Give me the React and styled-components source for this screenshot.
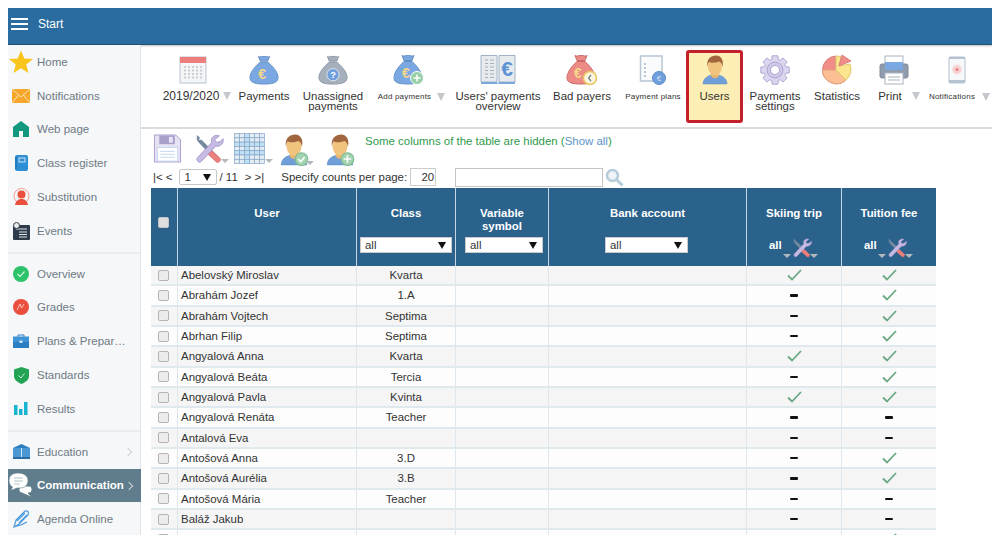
import React from 'react';
import styled, { createGlobalStyle } from 'styled-components';

const GlobalStyle = createGlobalStyle`
    html, body { background: #fff; }
    body {
        margin: 8px;
        font-family: "Liberation Sans", Arial, sans-serif;
        font-size: 11.45px;
        color: #333;
    }
`;

// ---- icons ----
const Svg = ({ w, h, children, vb }) => (
    <svg width={w} height={h} viewBox={vb || `0 0 ${w} ${h}`} style={{ display: 'block', flexShrink: 0 }}>{children}</svg>
);

const Bag = ({ fill, stroke, children }) => (
    <Svg w={30} h={30} vb="0 0 32 32">
        <path d="M10 1.5 C12 3 14 1 16 1.500 C18 1 20 3 22 1.500 L20 6.500 L12 6.500 Z" fill={fill} stroke={stroke} />
        <path d="M12 7.500 H20 C25 12 31 18 31 24 C31 30 24 31 16 31 C8 31 1 30 1 24 C1 18 7 12 12 7.500 Z" fill={fill} stroke={stroke} />
        {children}
    </Svg>
);
const Badge = ({ cx, cy, r, fill, children }) => (
    <g>
        <circle cx={cx} cy={cy} r={r} fill={fill} stroke="#fff" strokeWidth="1" />
        {children}
    </g>
);
const Plus = ({ cx, cy, s = 3.5 }) => (
    <path d={`M${cx - s} ${cy}H${cx + s}M${cx} ${cy - s}V${cy + s}`} stroke="#fff" strokeWidth="1.500" />
);
const Euro = ({ x, y, size, color }) => (
    <text x={x} y={y} fontSize={size} fill={color} textAnchor="middle" fontFamily="Liberation Sans" fontWeight="700">€</text>
);

const CalendarIcon = () => (
    <Svg w={28} h={28}>
        <rect x="1" y="1" width="26" height="26" fill="#f4f5f7" stroke="#b9c4cf" />
        <rect x="1" y="1" width="26" height="6" fill="#ec7f7c" />
        {[0, 1, 2, 3].map(r => [0, 1, 2, 3, 4].map(c => (
            <rect key={`${r}${c}`} x={5 + c * 4} y={10 + r * 3.500} width="2" height="2" fill="#c8d0d8" />
        )))}
    </Svg>
);
const PaymentsIcon = () => <Bag fill="#7ba8e2" stroke="#6690c4"><Euro x={14} y={26} size={15} color="#f5d78a" /></Bag>;
const UnassignedIcon = () => (
    <Bag fill="#a6afbc" stroke="#8c96a4">
        <circle cx="16" cy="21" r="6.500" fill="#6f9fdc" stroke="#dfe6ee" />
        <text x="16" y="24.500" fontSize="10" fontWeight="700" fill="#fff" textAnchor="middle" fontFamily="Liberation Sans">?</text>
    </Bag>
);
const AddPaymentsIcon = () => (
    <Svg w={32} h={32}>
        <path d="M9 1.500 C11 3 13 1 15 1.500 C17 1 19 3 21 1.500 L19 6.500 L11 6.500 Z" fill="#7ba8e2" stroke="#6690c4" />
        <path d="M11 7.500 H19 C24 12 29 18 29 24 C29 29 22 30 15 30 C7 30 1 29 1 24 C1 18 6 12 11 7.500 Z" fill="#7ba8e2" stroke="#6690c4" />
        <Euro x={13} y={24} size={14} color="#f5d78a" />
        <Badge cx={24} cy={24} r={6.500} fill="#9ad0a8"><Plus cx={24} cy={24} /></Badge>
    </Svg>
);
const OverviewIcon = () => (
    <Svg w={36} h={32}>
        <path d="M1 1.500 H17 V28 H1 Z" fill="#e8ebee" stroke="#9eb3c6" />
        <path d="M19 1.500 H35 V28 H19 Z" fill="#e8ebee" stroke="#9eb3c6" />
        <path d="M1 28 H17 L18 30 L19 28 H35 V30 H1 Z" fill="#7ba8d8" />
        {[6, 9.500, 13, 16.500, 20, 23.500].map(y => <path key={y} d={`M5 ${y}H8M10 ${y}H14`} stroke="#a8aeb4" />)}
        <text x="27" y="22" fontSize="21" fontWeight="700" fill="#5c93d6" textAnchor="middle" fontFamily="Liberation Sans">€</text>
    </Svg>
);
const BadPayersIcon = () => (
    <Svg w={32} h={32}>
        <path d="M9 1.500 C11 3 13 1 15 1.500 C17 1 19 3 21 1.500 L19 6.500 L11 6.500 Z" fill="#ec8a86" stroke="#c9696a" />
        <path d="M11 7.500 H19 C24 12 29 18 29 24 C29 29 22 30 15 30 C7 30 1 29 1 24 C1 18 6 12 11 7.500 Z" fill="#ec8a86" stroke="#c9696a" />
        <Euro x={12} y={24} size={14} color="#f5d78a" />
        <circle cx="24" cy="24" r="6.500" fill="#fdf6dc" stroke="#e8c65e" strokeWidth="1.500" />
        <path d="M25 21 L22.500 24 L25 27" fill="none" stroke="#6d7c8c" strokeWidth="1.200" />
    </Svg>
);
const PlansIcon = () => (
    <Svg w={28} h={30}>
        <path d="M1.500 1 H23 V26 H1.500 Z" fill="#fafbfc" stroke="#b8c6d4" strokeWidth="1.500" />
        {[8, 12, 16, 20].map(y => <rect key={y} x="5" y={y} width="2" height="2" fill="#b9c6d2" />)}
        <circle cx="20" cy="23" r="6.500" fill="#6f9fdc" stroke="#5f8bc4" />
        <text x="20" y="26" fontSize="8" fill="#cfe0f5" textAnchor="middle" fontFamily="Liberation Sans">€</text>
    </Svg>
);
const UserIcon = ({ w = 26, h = 30, children }) => (
    <Svg w={w} h={h} vb="0 0 26 30">
        <path d="M1 29 C1 23 6 21 9 20 H17 C20 21 25 23 25 29 Z" fill="#6f9ed8" stroke="#5f8bc4" strokeWidth=".5" />
        <path d="M9 18 H17 V21 C15 24 11 24 9 21 Z" fill="#e9b66f" />
        <ellipse cx="13" cy="11.500" rx="7" ry="9" fill="#f0c47e" />
        <path d="M5.500 12 C4 4 9 .5 14 .5 C19 .5 22 5 20.500 12 C20 9 19 7 17 6.500 C14 8 9 8 7 7 C6 8 5.800 10 5.500 12 Z" fill="#a0673f" />
        {children}
    </Svg>
);
const UserCheckIcon = () => (
    <UserIcon w={30} h={32}>
        <circle cx="20" cy="23.500" r="6" fill="#a3d3ae" stroke="#7fb892" />
        <path d="M17 23.500 L19.300 26 L23 21.500" fill="none" stroke="#fff" strokeWidth="1.500" />
    </UserIcon>
);
const UserPlusIcon = () => (
    <UserIcon w={30} h={32}>
        <circle cx="20" cy="23.500" r="6" fill="#a3d3ae" stroke="#7fb892" />
        <Plus cx={20} cy={23.500} />
    </UserIcon>
);

// eight toothed wheel, points worked out from the angle
const gearPath = (() => {
    const pts = [];
    for (let i = 0; i < 8; i++) {
        const a = (i * Math.PI) / 4 - Math.PI / 2;
        [[-0.3, 11], [-0.2, 14.500], [0.2, 14.500], [0.3, 11]].forEach(([d, r]) => {
            pts.push(`${(15 + r * Math.cos(a + d)).toFixed(1)} ${(15 + r * Math.sin(a + d)).toFixed(1)}`);
        });
    }
    return `M${pts.join('L')}Z`;
})();
const GearIcon = () => (
    <Svg w={30} h={30}>
        <path d={gearPath} fill="#dcd6ef" stroke="#b0a7d2" />
        <circle cx="15" cy="15" r="8" fill="#cfc8e8" stroke="#b0a7d2" />
        <circle cx="15" cy="15" r="4.500" fill="#fff" stroke="#b0a7d2" />
    </Svg>
);
const PieIcon = () => (
    <Svg w={32} h={32}>
        <path d="M15 16 L15 2 A14 14 0 0 0 1.500 16 A14 14 0 0 0 25 26 Z" fill="#f08d88" stroke="#d9817b" />
        <path d="M15 16 L1.500 16 A14 14 0 0 0 25 26 Z" fill="#fcbf93" stroke="#e2a57e" />
        <path d="M15 16 L15 2 L20 2.500 L18 12 L29 10 A14 14 0 0 1 25 26 Z" fill="#fbe58d" stroke="#e0c872" />
        <path d="M18 12 L21 1 L30 7 Z" fill="#f08d88" stroke="#d9817b" />
    </Svg>
);
const PrintIcon = () => (
    <Svg w={30} h={30}>
        <rect x="6" y="1" width="18" height="10" fill="#fff" stroke="#aab4c0" />
        <rect x="1" y="9" width="28" height="14" rx="2" fill="#8f9cad" stroke="#7d8a9b" />
        <rect x="6" y="7" width="18" height="8" fill="#7ba8e2" />
        <rect x="6" y="18" width="18" height="11" fill="#fff" stroke="#aab4c0" />
        <path d="M9 22H21M9 25H21" stroke="#aab4c0" />
    </Svg>
);
const PhoneIcon = () => (
    <Svg w={18} h={28}>
        <rect x=".5" y=".5" width="17" height="27" rx="2" fill="#b4c2d2" />
        <rect x="1.500" y="3" width="15" height="21" fill="#f7f8fa" />
        <circle cx="9" cy="13.500" r="5" fill="#f9dcdc" />
        <circle cx="9" cy="13.500" r="3" fill="none" stroke="#efa9aa" strokeDasharray="1 1" />
        <circle cx="9" cy="13.500" r="1.500" fill="#e8797b" />
    </Svg>
);
const SaveIcon = () => (
    <Svg w={29} h={29} vb="0 0 29 30">
        <path d="M1 1 H23 L28 6 V29 H1 Z" fill="#e6e1f3" stroke="#a99fd0" />
        <rect x="6" y="1.500" width="16" height="9" fill="#a99fc9" />
        <rect x="16" y="3" width="4" height="6" fill="#e8e4f4" />
        <rect x="4" y="14" width="21" height="14" fill="#fff" stroke="#c6d7ec" />
        <path d="M7 18H22M7 21H22M7 24H22" stroke="#c6d7ec" />
    </Svg>
);
const ToolsIcon = ({ size = 30 }) => (
    <Svg w={size} h={size} vb="0 0 32 32">
        <path d="M3 1 L6.500 4 L5 6 L8 6 L28 26 L25 30 L5 9 L3 6 Z" fill="#768aa0" />
        <path d="M16 15 L28 26 A3 3 0 0 1 24 30 L12 19 Z" fill="#ec7f7c" stroke="#cc6665" strokeWidth=".6" />
        <path d="M27 2 L22 6 L24 9 L28 8 L31 5 C32 10 28 14 23 13 L8 29 C6 32 1 28 4 25 L19 9 C17 4 22 0 27 2 Z" fill="#c7bbe4" stroke="#a595cc" />
    </Svg>
);
const GridIcon = () => (
    <Svg w={31} h={31}>
        {[0, 1, 2, 3, 4, 5].map(c => [0, 1, 2, 3, 4, 5, 6].map(r => (
            <rect key={`${c}-${r}`} x={.5 + c * 5} y={.5 + r * 4.300} width="5" height="4.300"
                fill={c === 2 || r === 2 || r === 4 ? '#bfe0f4' : '#e4edf3'} stroke="#86a6c8" strokeWidth=".7" />
        )))}
    </Svg>
);
const SearchIcon = () => (
    <Svg w={19} h={19}>
        <circle cx="7.500" cy="7.500" r="5.500" fill="#eef4f8" stroke="#b5ccd9" strokeWidth="2.500" />
        <path d="M11.500 11.500 L17.500 17.500" stroke="#b5ccd9" strokeWidth="3" />
    </Svg>
);
const Check = () => (
    <svg width="15" height="12" viewBox="0 0 15 12" style={{ display: 'block' }}>
        <path d="M1 6.500 L5 10.500 L14 1" fill="none" stroke="#6aa884" strokeWidth="1.800" />
    </svg>
);

// sidebar icons
const StarIcon = () => <Svg w={24} h={24}><path d="M12 .5 L15.300 8.500 L24 9 L17.200 14.500 L19.500 23 L12 18.300 L4.500 23 L6.800 14.500 L0 9 L8.700 8.500 Z" fill="#f7c51b" /></Svg>;
const MailIcon = () => (
    <Svg w={18} h={14}>
        <rect width="18" height="14" fill="#f7a62c" />
        <path d="M0 0 L9 8 L18 0 M0 14 L6.500 6 M18 14 L11.500 6" fill="none" stroke="#fde3b4" />
    </Svg>
);
const HomeIcon = () => (
    <Svg w={16} h={16}>
        <path d="M8 0 L16 6 V16 H10 V10 H6 V16 H0 V6 Z" fill="#11987f" />
    </Svg>
);
const RegisterIcon = () => (
    <Svg w={13} h={16}>
        <rect width="13" height="16" rx="2" fill="#2f8fd6" />
        <rect x="4" y="3" width="6" height="4" fill="none" stroke="#cfe6f7" />
        <path d="M1 2V14" stroke="#1b6aa8" />
    </Svg>
);
const SubstIcon = () => (
    <Svg w={17} h={18}>
        <circle cx="8.500" cy="8" r="7.500" fill="none" stroke="#f39a92" />
        <circle cx="8.500" cy="6.500" r="4" fill="#ea4f3e" />
        <path d="M2 17 C3 12 6 11 8.500 11 C11 11 14 12 15 17 Z" fill="#ea4f3e" />
    </Svg>
);
const EventsIcon = () => (
    <Svg w={17} h={18}>
        <rect y="3" width="17" height="15" rx="1" fill="#2e3b4a" />
        <path d="M3 7H14M6 10H14M6 12.500H14M6 15H14" stroke="#dfe4ea" />
        <circle cx="3.500" cy="3.500" r="3" fill="#e8ecef" stroke="#2e3b4a" />
    </Svg>
);
const OverviewSideIcon = () => (
    <Svg w={16} h={16}>
        <circle cx="8" cy="8" r="8" fill="#2dc36a" />
        <path d="M4.500 8 L7 10.500 L11.500 5.500" fill="none" stroke="#d4f4e0" strokeWidth="1.200" />
    </Svg>
);
const GradesIcon = () => (
    <Svg w={16} h={16}>
        <circle cx="8" cy="8" r="8" fill="#ea4f3e" />
        <path d="M4 11 L7 5 L8.500 9 L11 5" fill="none" stroke="#f7c3bc" />
    </Svg>
);
const CaseIcon = () => (
    <Svg w={16} h={14}>
        <path d="M5 3V1H11V3" fill="none" stroke="#2a7fc2" />
        <rect y="2.500" width="16" height="5.500" fill="#3d93d6" />
        <rect y="8" width="16" height="6" fill="#2a7fc2" />
        <rect x="6.500" y="6.500" width="3" height="2.500" fill="#cfe6f7" />
    </Svg>
);
const ShieldIcon = () => (
    <Svg w={15} h={17}>
        <path d="M7.500 0 L15 2.500 V9 C15 13 11 15.500 7.500 17 C4 15.500 0 13 0 9 V2.500 Z" fill="#23a455" />
        <path d="M4.500 8.500 L7 11 L10.500 6.500" fill="none" stroke="#c9efd6" />
    </Svg>
);
const BarsIcon = () => (
    <Svg w={14} h={13}>
        <rect y="3" width="3.500" height="10" fill="#17b5cf" />
        <rect x="5" y="7" width="3.500" height="6" fill="#17b5cf" />
        <rect x="10" width="3.500" height="13" fill="#17b5cf" />
    </Svg>
);
const BookIcon = () => (
    <Svg w={17} h={16}>
        <path d="M8.500 0 L17 4 H0 Z" fill="#2a7fc2" />
        <rect y="4" width="17" height="9" fill="#4a97d4" />
        <path d="M8.500 4V13" stroke="#cfe6f7" />
        <rect y="13" width="17" height="2" fill="#2a6ca6" />
    </Svg>
);
const ChatIcon = () => (
    <Svg w={24} h={25}>
        <path d="M13 13 H20 C24 13 24 20 20 20 H19 L23 24.500 L13 20 C9 20 9 13 13 13 Z" fill="#fff" stroke="#5f7d8c" />
        <path d="M9 0 C3 0 0 3 0 7.500 C0 10.500 1.500 13 3.500 14 L2 17.500 L8 15 H11 C16 15 19 12 19 7.500 C19 3 15 0 9 0 Z" fill="#fff" stroke="#5f7d8c" strokeWidth=".6" />
        <path d="M5 5H14M5 8H14M5 11H11" stroke="#b5c4cc" />
    </Svg>
);
const PenIcon = () => (
    <Svg w={16} h={18}>
        <path d="M1 17 L3 10 L12 1 C15 0 16 3 15 5 L6 14 Z M4 11 L12 3 M6 13 L14 5 M1 17 C5 16 9 15 14 12" fill="none" stroke="#4c9bdc" strokeWidth="1.200" />
    </Svg>
);

// ---- layout ----
const Shell = styled.div`
    width: 984px;
    height: 527px;
    background: #fff;
    box-shadow: 0 0 8px rgba(0, 0, 0, 0.28);
    display: flex;
    flex-direction: column;
    overflow: hidden;
`;
const TopBar = styled.header`
    height: 37px;
    flex-shrink: 0;
    box-sizing: border-box;
    display: flex;
    align-items: center;
    gap: 10px;
    padding: 0 3px 4px;
    background: #2a6c9f;
    border-bottom: 1px solid #1f5279;
    box-shadow: 0 1px 2px rgba(0, 0, 0, 0.25);
    color: #fff;
    font-size: 12px;
`;
const Burger = styled.div`
    width: 17px;
    height: 12px;
    box-sizing: border-box;
    border-top: 2px solid #fff;
    border-bottom: 2px solid #fff;
    display: flex;
    align-items: center;
    &::before {
        content: "";
        display: block;
        width: 100%;
        height: 2px;
        background: #fff;
    }
`;
const Body = styled.div`
    flex: 1;
    display: flex;
    min-height: 0;
`;
const Sidebar = styled.nav`
    width: 132px;
    flex-shrink: 0;
    background: #f5f7f9;
    border-right: 1px solid #e0e4e7;
`;
const SideGroup = styled.div`
    padding: ${p => p.$pad || '0'};
    border-bottom: ${p => (p.$line ? '2px solid #eaedef' : 'none')};
`;
const SideItem = styled.div`
    height: 33.8px;
    display: flex;
    align-items: center;
    position: relative;
    font-size: 11.5px;
    color: ${p => (p.$active ? '#fff' : '#6f7a84')};
    font-weight: ${p => (p.$active ? 700 : 400)};
    background: ${p => (p.$active ? '#5f7d8c' : 'transparent')};
    margin-right: ${p => (p.$active ? '-1px' : '0')};
    white-space: nowrap;
`;
const SideIcon = styled.span`
    width: 29px;
    flex-shrink: 0;
    box-sizing: border-box;
    padding-right: 3px;
    display: flex;
    justify-content: center;
`;
const Chevron = styled.span`
    position: absolute;
    right: 9px;
    top: 14px;
    width: 5px;
    height: 5px;
    border-top: 1px solid #ccd2d6;
    border-right: 1px solid #ccd2d6;
    transform: rotate(45deg);
`;
const Main = styled.main`
    flex: 1;
    min-width: 0;
    overflow: hidden;
`;
const Toolbar = styled.div`
    height: 84px;
    display: flex;
    padding: 5px 0 0 17px;
    box-sizing: border-box;
    border-bottom: 2px solid #dcdcdc;
`;
const ToolItem = styled.div`
    width: ${p => p.$w}px;
    height: 73px;
    flex-shrink: 0;
    box-sizing: border-box;
    display: flex;
    flex-direction: column;
    align-items: center;
    padding-top: ${p => (p.$active ? '1px' : '4px')};
    ${p => p.$active && `
        width: 57px;
        margin: 0 3px 0 4px;
        background: #fdeeb5;
        border: 3px solid #c4202c;
        border-radius: 3px;
    `}
`;
const ToolIcon = styled.div`
    height: 32px;
    display: flex;
    align-items: center;
    justify-content: center;
    margin-left: ${p => p.$nudge || 0}px;
`;
const ToolLabel = styled.div`
    position: relative;
    margin-top: ${p => (p.$small ? '5px' : '4px')};
    margin-right: ${p => p.$pull || 0}px;
    font-size: ${p => (p.$small ? '8px' : p.$digits ? '12px' : '11.45px')};
    letter-spacing: ${p => (p.$small ? '0.2px' : '0')};
    line-height: ${p => (p.$small ? '12px' : '10px')};
    text-align: center;
    white-space: nowrap;
    padding-top: ${p => (p.$small ? '0' : '1px')};
`;
const DownArrow = styled.span`
    position: absolute;
    top: 2px;
    left: calc(100% + ${p => p.$gap ?? 4}px);
    width: 0;
    height: 0;
    border-left: 4px solid transparent;
    border-right: 4px solid transparent;
    border-top: 8px solid #c4c8cc;
`;
const Content = styled.div`
    padding: 4px 0 0 10px;
`;
const ActionRow = styled.div`
    height: 33px;
    display: flex;
    align-items: flex-start;
`;
const ActionIcon = styled.div`
    position: relative;
    margin-left: ${p => p.$ml || 0}px;
    padding-top: ${p => p.$pt || 0}px;
`;
const SmallArrow = styled.span`
    position: absolute;
    right: ${p => p.$right ?? -7}px;
    bottom: ${p => p.$bottom ?? 1}px;
    width: 0;
    height: 0;
    border-left: 4px solid transparent;
    border-right: 4px solid transparent;
    border-top: 4px solid #b4b9be;
`;
const Notice = styled.div`
    margin: 2px 0 0 10px;
    color: #2f9a4c;
    white-space: nowrap;
    span { color: #5c93c6; }
`;
const PagerRow = styled.div`
    height: 22px;
    display: flex;
    align-items: center;
    padding-left: 2px;
    white-space: nowrap;
`;
const PagerText = styled.span`
    margin-left: ${p => p.$ml || 0}px;
`;
const PageSelect = styled.div`
    width: 38px;
    height: 16px;
    margin: 0 3px 0 6px;
    box-sizing: border-box;
    border: 1px solid #c8c8c8;
    border-radius: 2px;
    padding: 0 5px;
    display: flex;
    align-items: center;
    justify-content: space-between;
`;
const Caret = styled.span`
    width: 0;
    height: 0;
    border-left: 4px solid transparent;
    border-right: 4px solid transparent;
    border-top: 7px solid #111;
`;
const CountInput = styled.div`
    width: 26px;
    height: 18px;
    margin-left: 3px;
    box-sizing: border-box;
    border: 1px solid #ccc;
    text-align: right;
    padding-right: 1px;
    line-height: 16px;
`;
const SearchInput = styled.div`
    width: 148px;
    height: 19px;
    margin: 0 2px 0 19px;
    box-sizing: border-box;
    border: 1px solid #c4c4c4;
`;

const COLUMNS = '26px 179px 99px 93px 198px 95px 95px';

const TableHead = styled.div`
    display: grid;
    grid-template-columns: ${COLUMNS};
    width: 785px;
    height: 78px;
    background: #2b628c;
    color: #fff;
    font-weight: 700;
`;
const HeadCell = styled.div`
    box-sizing: border-box;
    border-left: ${p => (p.$first ? 'none' : '1px solid #c6d6e2')};
    padding-top: ${p => (p.$first ? '29px' : '19px')};
    padding-right: ${p => (p.$first ? '1px' : '0')};
    text-align: center;
    line-height: 13px;
    display: flex;
    flex-direction: column;
    align-items: center;
    position: relative;
`;
const Box = styled.span`
    display: block;
    width: 11px;
    height: 11px;
    border-radius: 2px;
    background: ${p => (p.$head ? '#dedede' : '#ececec')};
    border: 1px solid ${p => (p.$head ? '#c4c4c4' : '#b4b4b4')};
    box-sizing: border-box;
`;
const FilterSelect = styled.div`
    position: absolute;
    top: 49px;
    left: ${p => p.$left}px;
    width: ${p => p.$w}px;
    height: 16px;
    box-sizing: border-box;
    background: #fff;
    border: 1px solid #c9c9c9;
    color: #333;
    font-weight: 400;
    padding: 0 5px 0 4px;
    display: flex;
    align-items: center;
    justify-content: space-between;
`;
const ToolFilter = styled.div`
    position: absolute;
    top: 50px;
    left: 22px;
    display: flex;
    align-items: center;
    gap: 10px;
`;
const FilterAll = styled.span`
    position: relative;
    top: -3px;
`;
const ArrowWrap = styled.span`
    position: relative;
    display: block;
`;
const Rows = styled.div`
    width: 785px;
`;
const Row = styled.div`
    display: grid;
    grid-template-columns: ${COLUMNS};
    height: 20.33px;
    box-sizing: border-box;
    background: ${p => (p.$odd ? '#f5f5f5' : '#fdfdfd')};
    border-bottom: 2px solid #e0e9ee;
    color: #333;
`;
const Cell = styled.div`
    box-sizing: border-box;
    border-left: ${p => (p.$first ? 'none' : '1px solid #dde7ed')};
    display: flex;
    align-items: center;
    justify-content: ${p => (p.$left ? 'flex-start' : 'center')};
    padding-left: ${p => (p.$left ? '3px' : '0')};
    padding-right: ${p => (p.$first ? '1px' : '0')};
    white-space: nowrap;
`;
const Dash = styled.span`
    display: block;
    width: 8px;
    height: 2.500px;
    border-radius: 1px;
    background: #111;
`;

const menu = [
    [
        [StarIcon, 'Home'], [MailIcon, 'Notifications'], [HomeIcon, 'Web page'],
        [RegisterIcon, 'Class register'], [SubstIcon, 'Substitution'], [EventsIcon, 'Events'],
    ],
    [
        [OverviewSideIcon, 'Overview'], [GradesIcon, 'Grades'], [CaseIcon, 'Plans & Prepar…'],
        [ShieldIcon, 'Standards'], [BarsIcon, 'Results'],
    ],
];

const tools = [
    { w: 66, icon: CalendarIcon, label: ['2019/2020'], arrow: true, nudge: 4, digits: true },
    { w: 80, icon: PaymentsIcon, label: ['Payments'] },
    { w: 58, icon: UnassignedIcon, label: ['Unassigned', 'payments'] },
    { w: 94, icon: AddPaymentsIcon, label: ['Add payments'], small: true, arrow: true, gap: 6, pull: 9 },
    { w: 84, icon: OverviewIcon, label: ["Users' payments", 'overview'] },
    { w: 84, icon: BadPayersIcon, label: ['Bad payers'] },
    { w: 58, icon: PlansIcon, label: ['Payment plans'], small: true },
    { w: 64, icon: UserIcon, label: ['Users'], active: true },
    { w: 58, icon: GearIcon, label: ['Payments', 'settings'] },
    { w: 66, icon: PieIcon, label: ['Statistics'] },
    { w: 40, icon: PrintIcon, label: ['Print'], arrow: true, nudge: 8, gap: 10 },
    { w: 84, icon: PhoneIcon, label: ['Notifications'], small: true, arrow: true, nudge: 10, gap: 7 },
];

const rows = [
    ['Abelovský Miroslav', 'Kvarta', 1, 1],
    ['Abrahám Jozef', '1.A', 0, 1],
    ['Abrahám Vojtech', 'Septima', 0, 1],
    ['Abrhan Filip', 'Septima', 0, 1],
    ['Angyalová Anna', 'Kvarta', 1, 1],
    ['Angyalová Beáta', 'Tercia', 0, 1],
    ['Angyalová Pavla', 'Kvinta', 1, 1],
    ['Angyalová Renáta', 'Teacher', 0, 0],
    ['Antalová Eva', '', 0, 0],
    ['Antošová Anna', '3.D', 0, 1],
    ['Antošová Aurélia', '3.B', 0, 1],
    ['Antošová Mária', 'Teacher', 0, 0],
    ['Baláž Jakub', '', 0, 0],
    ['', '', 0, 1],
];

const Mark = ({ on }) => (on ? <Check /> : <Dash />);

const Side = () => (
    <Sidebar>
        {menu.map((group, i) => (
            <SideGroup key={i} $line $pad={i === 0 ? '0 0 4px' : '3px 0 4px'}>
                {group.map(([Icon, label]) => (
                    <SideItem key={label}>
                        <SideIcon><Icon /></SideIcon>
                        {label}
                    </SideItem>
                ))}
            </SideGroup>
        ))}
        <SideGroup $pad="3px 0 0">
            <SideItem>
                <SideIcon><BookIcon /></SideIcon>Education<Chevron />
            </SideItem>
            <SideItem $active>
                <SideIcon><ChatIcon /></SideIcon>Communication<Chevron />
            </SideItem>
            <SideItem>
                <SideIcon><PenIcon /></SideIcon>Agenda Online
            </SideItem>
        </SideGroup>
    </Sidebar>
);

const Tools = () => (
    <Toolbar>
        {tools.map((t) => (
            <ToolItem key={t.label[0]} $w={t.w} $active={t.active}>
                <ToolIcon $nudge={t.nudge}><t.icon /></ToolIcon>
                <ToolLabel $small={t.small} $digits={t.digits} $pull={t.pull}>
                    {t.label.map((line) => <div key={line}>{line}</div>)}
                    {t.arrow && <DownArrow $gap={t.gap} />}
                </ToolLabel>
            </ToolItem>
        ))}
    </Toolbar>
);

const Head = () => (
    <TableHead>
        <HeadCell $first><Box $head /></HeadCell>
        <HeadCell>User</HeadCell>
        <HeadCell>
            Class
            <FilterSelect $left={3} $w={92}>all<Caret /></FilterSelect>
        </HeadCell>
        <HeadCell>
            Variable<br />symbol
            <FilterSelect $left={9} $w={78}>all<Caret /></FilterSelect>
        </HeadCell>
        <HeadCell>
            Bank account
            <FilterSelect $left={56} $w={83}>all<Caret /></FilterSelect>
        </HeadCell>
        {['Skiing trip', 'Tuition fee'].map((name) => (
            <HeadCell key={name}>
                {name}
                <ToolFilter>
                    <ArrowWrap>
                        <FilterAll>all</FilterAll>
                        <SmallArrow $right={-9} $bottom={-3} />
                    </ArrowWrap>
                    <ArrowWrap>
                        <ToolsIcon size={20} />
                        <SmallArrow $right={-6} $bottom={0} />
                    </ArrowWrap>
                </ToolFilter>
            </HeadCell>
        ))}
    </TableHead>
);

export default function App() {
    return (
        <>
            <GlobalStyle />
            <Shell>
                <TopBar><Burger />Start</TopBar>
                <Body>
                    <Side />
                    <Main>
                        <Tools />
                        <Content>
                            <ActionRow>
                                <ActionIcon $ml={2} $pt={1}><SaveIcon /></ActionIcon>
                                <ActionIcon $ml={12} $pt={1}><ToolsIcon /><SmallArrow $right={-5} /></ActionIcon>
                                <ActionIcon $ml={10}><GridIcon /><SmallArrow $right={-8} /></ActionIcon>
                                <ActionIcon $ml={14} $pt={1}><UserCheckIcon /><SmallArrow $right={-5} /></ActionIcon>
                                <ActionIcon $ml={16} $pt={1}><UserPlusIcon /></ActionIcon>
                                <Notice>Some columns of the table are hidden (<span>Show all</span>)</Notice>
                            </ActionRow>
                            <PagerRow>
                                <PagerText>|&lt; &lt;</PagerText>
                                <PageSelect>1<Caret /></PageSelect>
                                <PagerText>/ 11</PagerText>
                                <PagerText $ml={7}>&gt; &gt;|</PagerText>
                                <PagerText $ml={17}>Specify counts per page:</PagerText>
                                <CountInput>20</CountInput>
                                <SearchInput />
                                <SearchIcon />
                            </PagerRow>
                            <Head />
                            <Rows>
                                {rows.map(([name, cls, ski, fee], i) => (
                                    <Row key={i} $odd={i % 2 === 0}>
                                        <Cell $first><Box /></Cell>
                                        <Cell $left>{name}</Cell>
                                        <Cell>{cls}</Cell>
                                        <Cell />
                                        <Cell />
                                        <Cell><Mark on={ski} /></Cell>
                                        <Cell><Mark on={fee} /></Cell>
                                    </Row>
                                ))}
                            </Rows>
                        </Content>
                    </Main>
                </Body>
            </Shell>
        </>
    );
}
